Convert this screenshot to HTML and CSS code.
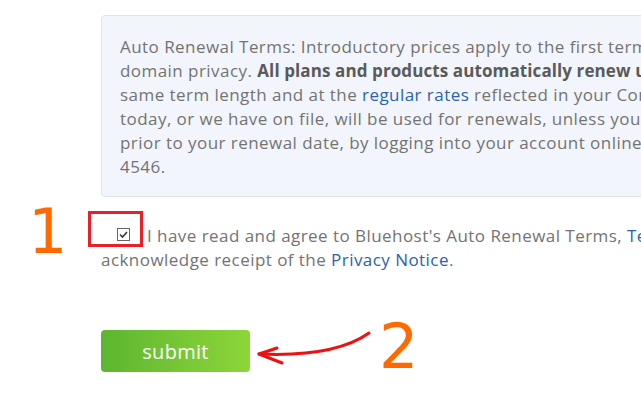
FILE: index.html
```html
<!DOCTYPE html>
<html>
<head>
<meta charset="utf-8">
<link rel="stylesheet" href="styles.css">
</head>
<body>
<div class="page">
  <div class="terms">
    Auto Renewal Terms: Introductory prices apply to the first term only and do not apply to any<br>
    domain privacy. <b>All plans and products automatically renew unless you cancel.</b> The renewal will be for the<br>
    same term length and at the <a href="#">regular rates</a> reflected in your Control Panel. The payment method you provide<br>
    today, or we have on file, will be used for renewals, unless you change it or cancel. You may cancel at any time<br>
    prior to your renewal date, by logging into your account online or by calling customer support at 888-401-<br>
    4546.
  </div>
  <p class="agree"><span class="check"><svg width="11" height="11" viewBox="0 0 11 11"><path d="M2 5.5 L4.5 8 L9 3" fill="none" stroke="#333" stroke-width="1.6"/></svg></span>I have read and agree to Bluehost's Auto Renewal Terms, <a href="#">Terms of Service</a> and Cancellation Policy and<br>acknowledge receipt of the <a href="#">Privacy Notice</a>.</p>
  <button class="submit">submit</button>
</div>
<div class="num num1">1</div>
<div class="highlight"></div>
<div class="num num2">2</div>
<svg class="arrow" width="130" height="50" viewBox="0 0 130 50">
  <path d="M119 13 C 95 30, 55 36, 9 34" fill="none" stroke="#f01010" stroke-width="3" stroke-linecap="round"/>
  <path d="M27 28 L9 34 L32 43" fill="none" stroke="#f01010" stroke-width="3" stroke-linecap="round" stroke-linejoin="round"/>
</svg>
</body>
</html>
```
FILE: styles.css
```css
html, body {
  margin: 0;
  padding: 0;
  background: #fff;
  overflow: hidden;
}
body {
  width: 641px;
  height: 418px;
  position: relative;
  font-family: "Open Sans", "Liberation Sans", sans-serif;
  font-size: 17px;
  letter-spacing: 0.45px;
  line-height: 24px;
  color: #737373;
}
.page {
  padding: 15px 0 0 101px;
}
.terms {
  width: 860px;
  background: #f2f6fc;
  border: 1px solid #dde4ec;
  border-radius: 4px;
  padding: 19px 18px 17px 18px;
  white-space: nowrap;
}
.terms b {
  color: #5a5a5a;
  font-weight: 700;
  letter-spacing: 0.1px;
}
a {
  color: #2a62b0;
  text-decoration: none;
}
.agree {
  margin: 27px 0 0 0;
  white-space: nowrap;
}
.check {
  display: inline-flex;
  align-items: center;
  justify-content: center;
  box-sizing: border-box;
  width: 13px;
  height: 13px;
  border: 1px solid #666;
  background: #fff;
  margin: 0 17px 0 16px;
  vertical-align: 2px;
}
.submit {
  display: block;
  margin-top: 58px;
  width: 149px;
  height: 42px;
  border: none;
  border-radius: 4px;
  background: linear-gradient(to right, #5db630, #8dd53a);
  color: #fff;
  font-family: "Open Sans", sans-serif;
  font-size: 20px;
  letter-spacing: 0.3px;
  padding: 0;
}
.num {
  position: absolute;
  font-family: "DejaVu Sans", sans-serif;
  font-size: 62px;
  line-height: 62px;
  letter-spacing: 0;
  color: #ff6a00;
}
.num1 {
  left: 28px;
  top: 201px;
}
.num2 {
  left: 379px;
  top: 316px;
}
.highlight {
  position: absolute;
  left: 88px;
  top: 211px;
  width: 55px;
  height: 36px;
  box-sizing: border-box;
  border: 3px solid #e8202a;
}
.arrow {
  position: absolute;
  left: 250px;
  top: 320px;
}
```
